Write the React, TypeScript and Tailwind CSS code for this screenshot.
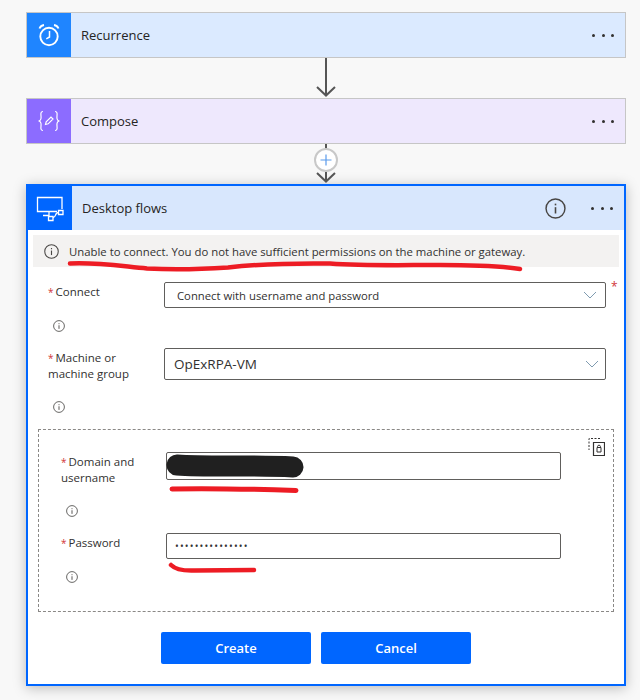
import { ReactNode } from "react";

function Dots({ className = "" }: { className?: string }) {
  return (
    <div className={`flex gap-[6.5px] ${className}`}>
      <span className="w-[3px] h-[3px] rounded-full bg-[#323130]" />
      <span className="w-[3px] h-[3px] rounded-full bg-[#323130]" />
      <span className="w-[3px] h-[3px] rounded-full bg-[#323130]" />
    </div>
  );
}

function InfoIcon({ size = 12, className = "" }: { size?: number; className?: string }) {
  return (
    <svg width={size} height={size} viewBox="0 0 16 16" fill="none" className={className}>
      <circle cx="8" cy="8" r="7.2" stroke="#484644" strokeWidth="1.1" />
      <rect x="7.4" y="7" width="1.2" height="4.8" fill="#484644" />
      <rect x="7.4" y="4.3" width="1.2" height="1.3" fill="#484644" />
    </svg>
  );
}

function Chevron({ className = "" }: { className?: string }) {
  return (
    <svg width="14" height="8" viewBox="0 0 14 8" fill="none" className={className}>
      <path d="M1 1l6 6 6-6" stroke="#7f9bb0" strokeWidth="1" />
    </svg>
  );
}

function ArrowHead() {
  return (
    <svg width="20" height="11" viewBox="0 0 20 11" fill="none" className="shrink-0">
      <path d="M1 1l9 8.5L19 1" stroke="#555" strokeWidth="2" />
    </svg>
  );
}

function Label({ children }: { children: ReactNode }) {
  return (
    <div className="text-[11.5px] leading-[15px] text-[#323130]">
      <span className="text-[10px] text-[#d13438] mr-[2px]">*</span>
      {children}
    </div>
  );
}

function StepCard({ title, icon, iconBg, bg }: { title: string; icon: ReactNode; iconBg: string; bg: string }) {
  return (
    <div className={`h-[46px] border border-[#c6c6c6] flex items-center ${bg}`}>
      <div className={`w-[44px] h-full flex items-center justify-center ${iconBg}`}>{icon}</div>
      <div className="ml-[10px] pt-[2px] text-[13px] text-[#252423] flex-1">{title}</div>
      <Dots className="mr-[11px]" />
    </div>
  );
}

export default function App() {
  return (
    <div className="relative w-[640px] h-[700px] overflow-hidden bg-[#f8f8f8] pt-3 pl-[26px] font-['Open_Sans',sans-serif]">
      <div className="w-[600px]">
        <StepCard
          title="Recurrence"
          iconBg="bg-[#1f85ff]"
          bg="bg-[#dbeaff]"
          icon={
            <svg width="24" height="26" viewBox="0 0 24 26" fill="none" stroke="white">
              <circle cx="12" cy="14.500" r="8.700" strokeWidth="1.900" />
              <path d="M12.500 9v6l-3.200 1.800" strokeWidth="1.500" />
              <path d="M2.500 6.500C3.300 4.500 5 3.300 7 3M21.500 6.500C20.700 4.500 19 3.300 17 3" strokeWidth="1.900" />
            </svg>
          }
        />

        <div className="h-[40px] flex flex-col items-center">
          <div className="w-[2px] h-[38px] bg-[#555] -mb-[10px]" />
          <ArrowHead />
        </div>

        <StepCard
          title="Compose"
          iconBg="bg-[#8c6cff]"
          bg="bg-[#eee8fd]"
          icon={
            <svg width="24" height="24" viewBox="0 0 24 24" fill="none" stroke="white" strokeWidth="1.200">
              <path d="M6 2.500C2.500 2.500 4.500 7 4 9.500c-.3 1.500-1.500 2.500-2.500 2.500 1 0 2.200 1 2.500 2.500.5 2.500-1.500 7 2 7" />
              <path d="M18 2.500c3.500 0 1.500 4.500 2 7 .3 1.500 1.500 2.500 2.500 2.500-1 0-2.200 1-2.500 2.500-.5 2.500 1.500 7-2 7" />
              <path d="M8.500 15.500l.7-2.700 4.800-4.800 2 2-4.800 4.800z" />
            </svg>
          }
        />

        <div className="h-[40px] flex flex-col items-center">
          <div className="w-[2px] h-[6px] bg-[#555]" />
          <div className="w-[24px] h-[24px] -mt-[2px] shrink-0 rounded-full border-2 border-[#c8c8c8] bg-white flex items-center justify-center">
            <svg width="12" height="12" viewBox="0 0 12 12" fill="none">
              <path d="M6 0.500v11M0.500 6h11" stroke="#5b9bec" strokeWidth="1.200" />
            </svg>
          </div>
          <div className="w-[2px] h-[10px] bg-[#555] -mb-[10px] shrink-0" />
          <ArrowHead />
        </div>

        <div className="h-[502px] border-2 border-[#0066ff] bg-white shadow-[0_2px_12px_rgba(0,0,0,0.25)]">
          <div className="h-[44px] flex items-center bg-[#d8e7fd]">
            <div className="w-[44px] h-full flex items-center justify-center bg-[#0066ff]">
              <svg width="30" height="28" viewBox="0 0 30 28" fill="none" stroke="white" strokeWidth="1.300">
                <path d="M22 17.500H2.500v-14h24.500v11.500" />
                <path d="M14 17.500v4.500M8 21.500h6" />
                <path d="M13.500 22.500h4.500v4h-4.500zM23.500 16.500h4.500v4h-4.500z" />
                <path d="M18 23.500c3.500 0 1.500-5 5.500-5" />
              </svg>
            </div>
            <div className="ml-[10px] pt-[2px] text-[13px] text-[#252423] flex-1">Desktop flows</div>
            <InfoIcon size={21} className="mr-[25px]" />
            <Dots className="mr-[11px]" />
          </div>

          <div className="mt-[5px] mx-[5px] h-[32px] bg-[#f3f2f1] flex items-center">
            <InfoIcon size={15} className="ml-[11px] mr-[10px]" />
            <span className="pt-[2px] text-[11.35px] text-[#323130] whitespace-nowrap">
              Unable to connect. You do not have sufficient permissions on the machine or gateway.
            </span>
          </div>

          <div className="mt-[15px] ml-[20px] h-[26px] flex">
            <div className="w-[116px] pt-[2px]">
              <Label>Connect</Label>
            </div>
            <div className="w-[442px] h-[26px] border border-[#605e5c] rounded-[2px] flex items-center justify-between pl-3 pr-[8px]">
              <span className="pt-[3px] text-[11.3px] text-[#323130]">Connect with username and password</span>
              <Chevron />
            </div>
            <span className="ml-[5px] text-xs leading-[10px] text-[#d13438]">*</span>
          </div>
          <InfoIcon size={12} className="mt-[12px] ml-[25px]" />

          <div className="mt-[16px] ml-[20px] h-[32px] flex">
            <div className="w-[116px] pt-[2px]">
              <Label>
                Machine or
                <br />
                machine group
              </Label>
            </div>
            <div className="w-[442px] h-[32px] border border-[#605e5c] rounded-[2px] flex items-center justify-between pl-[9px] pr-[6px]">
              <span className="text-[13.5px] text-[#323130]">OpExRPA-VM</span>
              <Chevron />
            </div>
          </div>
          <InfoIcon size={12} className="mt-[21px] ml-[25px]" />

          <div className="relative mt-[16px] ml-[10px] w-[576px] h-[183px] border border-dashed border-[#8a8886]">
            <svg width="18" height="18" viewBox="0 0 18 18" fill="none" className="absolute top-[8px] right-[8px]">
              <path d="M13 0.500H2v11.500" stroke="#323130" strokeDasharray="2 1.500" />
              <path d="M6.500 4.500h11v13h-11z" stroke="#323130" strokeWidth="1.200" fill="white" />
              <path d="M10 9.500h4v4.500h-4zM10.600 9.500V8.300c0-1.500 2.800-1.500 2.800 0v1.200" stroke="#323130" />
            </svg>
            <div className="pt-[22px] pl-[22px]">
              <div className="h-[28px] flex">
                <div className="w-[105px] pt-[2px]">
                  <Label>
                    Domain and
                    <br />
                    username
                  </Label>
                </div>
                <div className="w-[395px] h-[28px] border border-[#605e5c] rounded-[2px]" />
              </div>
              <InfoIcon size={12} className="mt-[25px] ml-[5px]" />
              <div className="mt-[16px] h-[26px] flex">
                <div className="w-[105px] pt-[2px]">
                  <Label>Password</Label>
                </div>
                <div className="w-[395px] h-[26px] border border-[#605e5c] rounded-[2px] flex items-center pl-[8px] text-[10px] tracking-[1.15px] text-[#323130]">
                  •••••••••••••••
                </div>
              </div>
              <InfoIcon size={12} className="mt-[12px] ml-[5px]" />
            </div>
          </div>

          <div className="mt-[20px] ml-[133px] flex gap-[10px]">
            <button className="w-[150px] h-[32px] pt-[2px] rounded-[2px] bg-[#0066ff] text-white text-[13px] font-semibold">Create</button>
            <button className="w-[150px] h-[32px] pt-[2px] rounded-[2px] bg-[#0066ff] text-white text-[13px] font-semibold">Cancel</button>
          </div>
        </div>
      </div>

      {/* hand drawn marks on top of the screenshot */}
      <svg width="640" height="700" viewBox="0 0 640 700" fill="none" className="absolute inset-0 pointer-events-none" strokeLinecap="round">
        <path d="M70 263.500C95 262 120 266 147 268.500C175 270 205 269 228 267.500C260 264 295 263 330 263.500C365 266 400 265 440 265C470 265 500 266 520 269" stroke="#ed1c24" strokeWidth="4.500" />
        <path d="M177 465C205 467 250 465 293 467" stroke="#202020" strokeWidth="21" />
        <path d="M172 489C210 488 250 489 296 490.500" stroke="#ed1c24" strokeWidth="5" />
        <path d="M171 565C176 570 184 571 195 570.500L254 570" stroke="#ed1c24" strokeWidth="4.500" />
      </svg>
    </div>
  );
}
